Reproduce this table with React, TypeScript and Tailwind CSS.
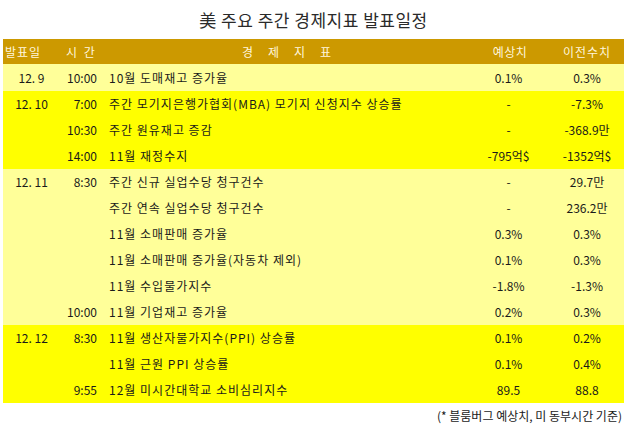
const rows = [
  { group: 0, date: "12. 9", time: "10:00", name: "10월 도매재고 증가율", est: "0.1%", prev: "0.3%", tall: true },
  { group: 1, date: "12. 10", time: "7:00", name: "주간 모기지은행가협회(MBA) 모기지 신청지수 상승률", est: "-", prev: "-7.3%" },
  { group: 1, date: "", time: "10:30", name: "주간 원유재고 증감", est: "-", prev: "-368.9만" },
  { group: 1, date: "", time: "14:00", name: "11월 재정수지", est: "-795억$", prev: "-1352억$" },
  { group: 2, date: "12. 11", time: "8:30", name: "주간 신규 실업수당 청구건수", est: "-", prev: "29.7만" },
  { group: 2, date: "", time: "", name: "주간 연속 실업수당 청구건수", est: "-", prev: "236.2만" },
  { group: 2, date: "", time: "", name: "11월 소매판매 증가율", est: "0.3%", prev: "0.3%" },
  { group: 2, date: "", time: "", name: "11월 소매판매 증가율(자동차 제외)", est: "0.1%", prev: "0.3%" },
  { group: 2, date: "", time: "", name: "11월 수입물가지수", est: "-1.8%", prev: "-1.3%" },
  { group: 2, date: "", time: "10:00", name: "11월 기업재고 증가율", est: "0.2%", prev: "0.3%" },
  { group: 3, date: "12. 12", time: "8:30", name: "11월 생산자물가지수(PPI) 상승률", est: "0.1%", prev: "0.2%" },
  { group: 3, date: "", time: "", name: "11월 근원 PPI 상승률", est: "0.1%", prev: "0.4%" },
  { group: 3, date: "", time: "9:55", name: "12월 미시간대학교 소비심리지수", est: "89.5", prev: "88.8" },
];

const cols = "grid grid-cols-[57px_40px_370px_80px_74px]";

export default function App() {
  return (
    <div
      className="w-[627px] h-[428px] bg-white text-[12px] text-[#1a1a1a]"
      style={{ fontFamily: '"Noto Sans CJK KR", "Noto Sans", sans-serif' }}
    >
      <div className="h-[39px] flex items-center justify-center text-[17px] text-[#2a2a2a] tracking-[0.5px]">
        美 주요 주간 경제지표 발표일정
      </div>
      <div className="mx-[3px]">
        <div className={`${cols} h-[25px] items-center bg-[#cc9900] text-[#fff6dc]`}>
          <div className="pl-[2px] tracking-[1px]">발표일</div>
          <div className="pl-[6px] tracking-[2px]">시 간</div>
          <div className="pl-[142px] tracking-[15px]">경제지표</div>
          <div className="text-center tracking-[0.5px]">예상치</div>
          <div className="text-center tracking-[1px]">이전수치</div>
        </div>
        {rows.map((r, i) => (
          <div
            key={i}
            className={`${cols} items-center ${r.tall ? "h-[27px]" : "h-[26px]"} ${
              r.group % 2 === 0 ? "bg-[#ffff99]" : "bg-[#ffff00]"
            }`}
          >
            <div className="text-center">{r.date}</div>
            <div className="text-right pr-[3px]">{r.time}</div>
            <div className="pl-[9px] tracking-[1px]">{r.name}</div>
            <div className="text-center pr-[3px]">{r.est}</div>
            <div className="text-center">{r.prev}</div>
          </div>
        ))}
      </div>
      <div className="text-right pr-[5px] pt-[4px]">(* 블룸버그 예상치, 미 동부시간 기준)</div>
    </div>
  );
}
